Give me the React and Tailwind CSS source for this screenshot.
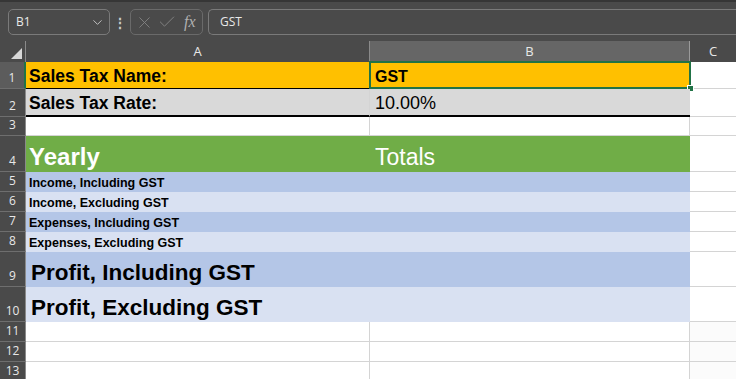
import React from 'react';
import { ChevronDown, X, Check } from 'lucide-react';

const rows = [
  { n: 1, h: 'h-[27px]', a: 'Sales Tax Name:', b: 'GST', bg: 'bg-[#ffc000]', aText: 'text-[17.5px] font-bold', bText: 'text-[16px] font-bold', border: 'border-b border-black', sel: true },
  { n: 2, h: 'h-[28px]', a: 'Sales Tax Rate:', b: '10.00%', bg: 'bg-[#d9d9d9]', aText: 'text-[17.5px] font-bold', bText: 'text-[18px]', border: 'border-b-2 border-black' },
  { n: 3, h: 'h-[19px]', bg: 'bg-white', border: 'border-b border-[#d4d4d4]', grid: true },
  { n: 4, h: 'h-[36px]', a: 'Yearly', b: 'Totals', bg: 'bg-[#70ad47]', aText: 'text-[24px] font-bold text-white', bText: 'text-[23px] text-white' },
  { n: 5, h: 'h-[20px]', a: 'Income, Including GST', bg: 'bg-[#b4c6e7]', aText: 'text-[12.5px] font-bold' },
  { n: 6, h: 'h-[20px]', a: 'Income, Excluding GST', bg: 'bg-[#d9e1f2]', aText: 'text-[12.5px] font-bold' },
  { n: 7, h: 'h-[20px]', a: 'Expenses, Including GST', bg: 'bg-[#b4c6e7]', aText: 'text-[12.5px] font-bold' },
  { n: 8, h: 'h-[20px]', a: 'Expenses, Excluding GST', bg: 'bg-[#d9e1f2]', aText: 'text-[12.5px] font-bold' },
  { n: 9, h: 'h-[35px]', a: 'Profit, Including GST', bg: 'bg-[#b4c6e7]', aText: 'text-[22.5px] font-bold pl-[2px]' },
  { n: 10, h: 'h-[35px]', a: 'Profit, Excluding GST', bg: 'bg-[#d9e1f2]', aText: 'text-[22.5px] font-bold pl-[2px]' },
  { n: 11, h: 'h-[20px]', bg: 'bg-white', border: 'border-b border-[#d4d4d4]', grid: true },
  { n: 12, h: 'h-[20px]', bg: 'bg-white', border: 'border-b border-[#d4d4d4]', grid: true },
  { n: 13, h: 'h-[20px]', bg: 'bg-white', border: 'border-b border-[#d4d4d4]', grid: true },
];

function FormulaBar() {
  return (
    <div className="h-[41px] bg-[#4a4a4a] border-t-2 border-[#363636] flex items-start pt-[7px] pl-[8px] text-[#e8e8e8] font-['Open_Sans',sans-serif] text-[12px] overflow-hidden">
      <div className="w-[102px] shrink-0 h-[26px] border border-[#7a7a7a] rounded-[5px] flex items-center justify-between pl-[7px] pr-[4px]">
        <span>B1</span>
        <ChevronDown className="w-[15px] h-[15px] text-[#c8c8c8]" strokeWidth={1.5} />
      </div>
      <div className="w-[20px] shrink-0 h-[26px] flex items-center justify-center text-[#c8c8c8] text-[14px] font-bold">⋮</div>
      <div className="w-[73px] shrink-0 h-[26px] border border-[#6a6a6a] rounded-[5px] flex items-center gap-[3px] pl-[4px] text-[#858585]">
        <X className="w-[19px] h-[19px]" strokeWidth={1.1} />
        <Check className="w-[20px] h-[20px]" strokeWidth={1.1} />
        <span className="ml-[4px] italic text-[16px] text-[#b0b0b0] font-['Liberation_Serif',serif]">fx</span>
      </div>
      <div className="ml-[5px] shrink-0 w-[560px] h-[26px] border-y border-l border-[#7a7a7a] rounded-l-[5px] flex items-center pl-[11px]">
        GST
      </div>
    </div>
  );
}

function ColumnHeader() {
  return (
    <div className="h-[21px] flex bg-[#4a4a4a] text-[#e8e8e8] text-[13px] font-['Open_Sans',sans-serif]">
      <div className="w-[26px] shrink-0 border-r border-[#8a8a8a] relative">
        <div className="absolute right-[3px] bottom-[3px] w-0 h-0 border-l-[11px] border-l-transparent border-b-[11px] border-b-[#d8d8d8]" />
      </div>
      <div className="w-[344px] shrink-0 border-r border-[#8a8a8a] flex items-center justify-center">A</div>
      <div className="w-[320px] shrink-0 bg-[#666666] border-r border-[#9a9a9a] flex items-center justify-center">B</div>
      <div className="flex-1 flex items-center justify-center">C</div>
    </div>
  );
}

function Row({ r }) {
  const first = r.n === 1;
  return (
    <div className={`${r.h} flex`}>
      <div
        className={`w-[26px] shrink-0 border-b border-[#6e6e6e] ${first ? 'bg-[#5c5c5c] border-r-2 border-r-[#217346]' : 'bg-[#4a4a4a] border-r border-r-[#8a8a8a]'} flex items-end justify-center pb-[1px] text-[12px] text-[#e8e8e8] font-['Open_Sans',sans-serif]`}
      >
        {r.n}
      </div>
      <div
        className={`w-[344px] shrink-0 ${r.bg} ${r.border || ''} ${r.grid || r.n === 2 ? 'border-r border-r-[#d4d4d4]' : ''} flex items-end pl-[3px] pb-[1px] leading-none whitespace-nowrap`}
      >
        <span className={`${r.aText || ''} pb-[2px]`}>{r.a}</span>
      </div>
      <div
        className={`w-[320px] shrink-0 relative ${r.bg} ${r.border || ''} ${r.grid ? 'border-r border-r-[#d4d4d4]' : ''} flex items-end pl-[5px] pb-[1px] leading-none whitespace-nowrap`}
      >
        <span className={`${r.bText || ''} pb-[2px]`}>{r.b}</span>
        {r.sel && (
          <>
            <div className="absolute -left-[1px] -top-[1px] -right-[1px] -bottom-[1px] border-2 border-[#217346]" />
            <div className="absolute -right-[4px] -bottom-[4px] w-[7px] h-[7px] bg-[#217346] border border-white" />
          </>
        )}
      </div>
      <div className={`flex-1 border-b border-[#d4d4d4] ${r.n >= 11 ? 'bg-[#fbfbfb]' : 'bg-white'}`} />
    </div>
  );
}

export default function App() {
  return (
    <div className="w-[736px] h-[379px] overflow-hidden bg-white font-['Liberation_Sans',Arial,sans-serif] text-black">
      <FormulaBar />
      <ColumnHeader />
      {rows.map((r) => (
        <Row key={r.n} r={r} />
      ))}
    </div>
  );
}
